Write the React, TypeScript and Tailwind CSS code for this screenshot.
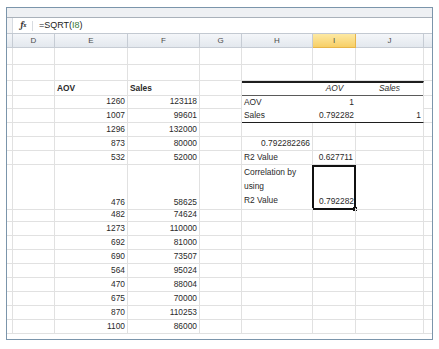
import clsx from "clsx";
import type { ReactNode } from "react";

const COLS = "grid grid-cols-[6px_42px_73px_72px_42px_71px_43px_68px_8px]";
const FONT = { fontFamily: '"Liberation Sans", Arial, sans-serif' };

function Cell({
  children,
  className = "",
  right = false,
}: {
  children?: ReactNode;
  className?: string;
  right?: boolean;
}) {
  return (
    <div
      className={clsx(
        "relative flex items-end whitespace-nowrap border-b border-r border-[#e1e1e1] px-[2px] pb-[2px] leading-[10px]",
        right && "justify-end",
        className
      )}
    >
      {children}
    </div>
  );
}

type Row = { e?: string; f?: string; hh?: string; i?: string };

// plain rows under the tall one
const lower: Row[] = [
  { e: "482", f: "74624" },
  { e: "1273", f: "110000" },
  { e: "692", f: "81000" },
  { e: "690", f: "73507" },
  { e: "564", f: "95024" },
  { e: "470", f: "88004" },
  { e: "675", f: "70000" },
  { e: "870", f: "110253" },
  { e: "1100", f: "86000" },
];

function PlainRow({ r, h = "h-[14px]" }: { r: Row; h?: string }) {
  return (
    <div className={clsx(COLS, h)}>
      <Cell />
      <Cell />
      <Cell right>{r.e}</Cell>
      <Cell right>{r.f}</Cell>
      <Cell />
      <Cell right={!!r.hh && /^[0-9]/.test(r.hh)}>{r.hh}</Cell>
      <Cell right>{r.i}</Cell>
      <Cell />
      <Cell className="border-r-0" />
    </div>
  );
}

const headers = ["", "D", "E", "F", "G", "H", "I", "J", ""];

export default function App() {
  return (
    <div className="h-[349px] w-[439px] bg-white pl-[6px] pt-[7px]" style={FONT}>
      <div className="flex h-[333px] w-[427px] flex-col border border-[#7b95ab] text-[8.4px] text-[#2a2a2a]">
        {/* ribbon remnant */}
        <div className="h-[10px] border-b border-[#a9b1ba] bg-[#eef0f3]" />

        {/* formula bar */}
        <div className="flex h-[16px] items-center border-b border-[#c3c9d1] bg-white">
          <div className="h-full w-[6px] border-r border-[#d6dbe1] bg-[#f3f4f6]" />
          <div className="flex w-[17px] items-center justify-center pl-[4px] font-serif text-[9px] font-bold italic text-[#333]">
            f<span className="text-[6px]">x</span>
          </div>
          <div className="mx-[2px] h-[10px] w-px bg-[#d8dce1]" />
          <div className="pl-[4px] text-[9px] text-[#222]">
            =SQRT(<span className="text-[#3a7a3a]">I8</span>)
          </div>
        </div>

        {/* column headers */}
        <div className={clsx(COLS, "h-[14px]")}>
          {headers.map((c, k) => (
            <div
              key={k}
              className={clsx(
                "flex items-center justify-center border-b border-r text-[8px] text-[#4b4b4b]",
                c === "I"
                  ? "border-[#e7b54a] bg-gradient-to-b from-[#fde9a3] to-[#f7cf65]"
                  : "border-[#c6ccd4] bg-gradient-to-b from-[#f4f6f9] to-[#e3e8ee]",
                k === 8 && "border-r-0"
              )}
            >
              {c}
            </div>
          ))}
        </div>

        <PlainRow r={{}} h="h-[17px]" />
        <PlainRow r={{}} h="h-[16px]" />

        {/* table header row */}
        <div className={clsx(COLS, "h-[14px]")}>
          <Cell />
          <Cell />
          <Cell className="font-bold">AOV</Cell>
          <Cell className="font-bold">Sales</Cell>
          <Cell />
          <Cell className="border-r-0 border-b-[1.5px] border-t-2 border-b-[#5a5a5a] border-t-[#1e1e1e]" />
          <Cell className="justify-center border-r-0 border-b-[1.5px] border-t-2 border-b-[#5a5a5a] border-t-[#1e1e1e] italic">
            AOV
          </Cell>
          <Cell className="justify-center border-b-[1.5px] border-t-2 border-b-[#5a5a5a] border-t-[#1e1e1e] italic">
            Sales
          </Cell>
          <Cell className="border-r-0" />
        </div>

        <div className={clsx(COLS, "h-[14px]")}>
          <Cell />
          <Cell />
          <Cell right>1260</Cell>
          <Cell right>123118</Cell>
          <Cell />
          <Cell className="border-b-0 border-r-0">AOV</Cell>
          <Cell right className="border-b-0 border-r-0">
            1
          </Cell>
          <Cell className="border-b-0" />
          <Cell className="border-r-0" />
        </div>

        <div className={clsx(COLS, "h-[14px]")}>
          <Cell />
          <Cell />
          <Cell right>1007</Cell>
          <Cell right>99601</Cell>
          <Cell />
          <Cell className="border-r-0 border-b-[#1e1e1e]">Sales</Cell>
          <Cell right className="border-r-0 border-b-[#1e1e1e]">
            0.792282
          </Cell>
          <Cell right className="border-b-[#1e1e1e]">
            1
          </Cell>
          <Cell className="border-r-0" />
        </div>

        <PlainRow r={{ e: "1296", f: "132000" }} />
        <PlainRow r={{ e: "873", f: "80000", hh: "0.792282266" }} />
        <PlainRow r={{ e: "532", f: "52000", hh: "R2 Value", i: "0.627711" }} />

        {/* wrapped row */}
        <div className={clsx(COLS, "h-[43px]")}>
          <Cell />
          <Cell />
          <Cell right>476</Cell>
          <Cell right>58625</Cell>
          <Cell />
          <Cell className="whitespace-normal pb-[1px] leading-[14px]">
            Correlation by
            <br />
            using
            <br />
            R2 Value
          </Cell>
          <Cell right className="-ml-px border-2! border-[#111]! pr-0">
            0.792282
            <span className="absolute -bottom-[3px] -right-[3px] h-[4px] w-[4px] bg-[#111]" />
          </Cell>
          <Cell />
          <Cell className="border-r-0" />
        </div>

        {lower.map((r, k) => (
          <PlainRow key={k} r={r} />
        ))}
      </div>
    </div>
  );
}
